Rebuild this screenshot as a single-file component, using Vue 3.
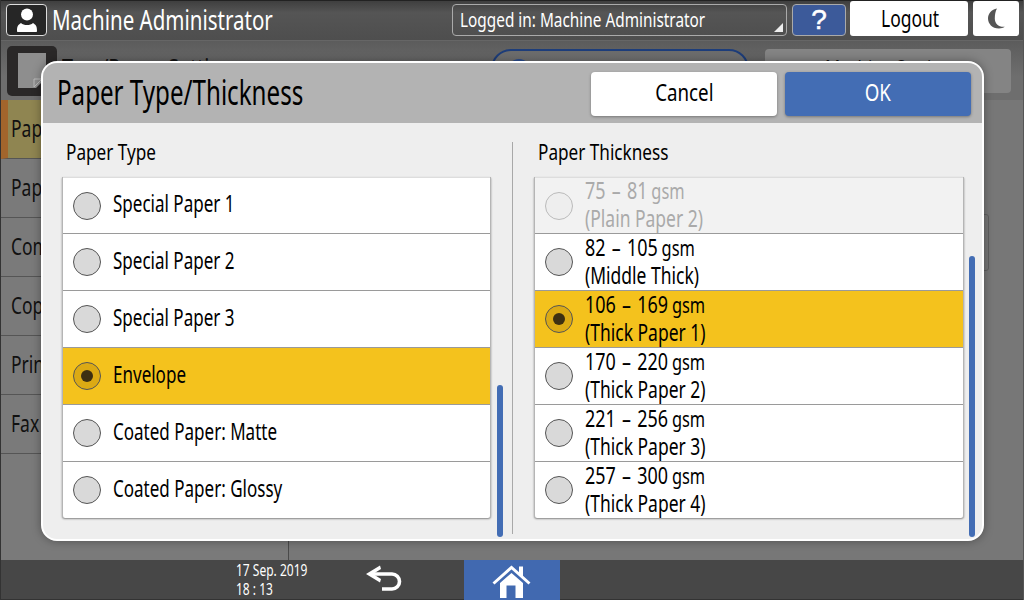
<script setup>
const typeRows = [
  { label: 'Special Paper 1' },
  { label: 'Special Paper 2' },
  { label: 'Special Paper 3' },
  { label: 'Envelope', selected: true },
  { label: 'Coated Paper: Matte' },
  { label: 'Coated Paper: Glossy' },
]
const thickRows = [
  { range: '75 – 81', name: '(Plain Paper 2)', disabled: true },
  { range: '82 – 105', name: '(Middle Thick)' },
  { range: '106 – 169', name: '(Thick Paper 1)', selected: true },
  { range: '170 – 220', name: '(Thick Paper 2)' },
  { range: '221 – 256', name: '(Thick Paper 3)' },
  { range: '257 – 300', name: '(Thick Paper 4)' },
]
const sideItems = ['Paper Tray', 'Paper', 'Common', 'Copier', 'Printer', 'Fax']
</script>

<template>
  <div class="screen">
    <header class="top">
      <div class="user-box">
        <svg width="22" height="24" viewBox="0 0 22 24"><circle cx="11" cy="6.500" r="6" fill="#fff"/><path d="M1 23c0-5 1-6 4-8 1.500 1.500 3.500 2 6 2s4.500-.5 6-2c3 2 4 3 4 8 0 .6-.4 1-1 1H2c-.6 0-1-.4-1-1z" fill="#fff"/></svg>
      </div>
      <span class="top-name"><span class="nw">Machine Administrator</span></span>
      <div class="logged">
        <span class="nw">Logged in: Machine Administrator</span>
        <i class="corner"></i>
      </div>
      <div class="help">?</div>
      <div class="logout"><span class="nw">Logout</span></div>
      <div class="moon">
        <svg width="17" height="21" viewBox="0 0 17 21"><path d="M9 .5C3.500 1.500 0 5.500 0 10.500S4 20.500 11 20.500c2.200 0 4.300-.6 5.800-1.700C10.500 19.300 6.800 15.500 6.800 10.500 6.800 6.500 7.500 3 9 .5z" fill="#555"/></svg>
      </div>
    </header>

    <div class="sub">
      <svg class="tray-icon" width="50" height="50" viewBox="0 0 50 50">
        <rect width="50" height="50" rx="5" fill="#2a2828"/>
        <path d="M11 7H39V32L29 42H11z" fill="#8e8e8e"/>
        <path d="M27 33H35L27 41z" fill="none" stroke="#bbb"/>
      </svg>
      <span class="sub-title"><span class="nw">Tray/Paper Settings</span></span>
      <div class="pill"><i class="pill-dot"></i></div>
      <div class="sub-btn"><span class="nw">Machine Settings</span></div>
    </div>

    <div class="main">
      <nav class="side">
        <div v-for="(s, i) in sideItems" :key="s" class="side-row" :class="{ active: i === 0 }">
          <span class="nw">{{ s }}</span>
        </div>
      </nav>
      <div class="content">
        <div class="ghost"></div>
      </div>
    </div>

    <footer class="foot">
      <div class="clock">
        <span class="nw">17 Sep. 2019</span>
        <span class="nw">18 : 13</span>
      </div>
      <svg class="back" width="38" height="30" viewBox="0 0 38 30">
        <path d="M5 10H27a7.500 7.500 0 0 1 0 15H17" fill="none" stroke="#fff" stroke-width="3.600"/>
        <path d="M1 10 15 1.500 16 5 8 10 16 15 15 18.500z" fill="#fff"/>
      </svg>
      <div class="home">
        <svg width="40" height="33" viewBox="0 0 40 33">
          <path d="M1.500 18.500 19.500 2.500 37.500 18.500" fill="none" stroke="#fff" stroke-width="3"/>
          <path d="M27 1.500h4v10.500l-4-3.500z" fill="#fff"/>
          <path d="M19.500 8 31 18V33H23.500V20.500H14.500V33H8V18z" fill="#fff"/>
        </svg>
      </div>
    </footer>

    <section class="modal">
      <div class="modal-head">
        <h1 class="modal-title"><span class="nw">Paper Type/Thickness</span></h1>
        <button class="btn cancel"><span class="nw">Cancel</span></button>
        <button class="btn ok"><span class="nw">OK</span></button>
      </div>
      <div class="modal-body">
        <div class="pane pane-left">
          <div class="pane-label"><span class="nw">Paper Type</span></div>
          <div class="list-wrap">
            <div class="list">
              <div v-for="r in typeRows" :key="r.label" class="row" :class="{ selected: r.selected }">
                <span class="radio"><i v-if="r.selected"></i></span>
                <span class="nw">{{ r.label }}</span>
              </div>
            </div>
            <div class="track"><div class="thumb thumb-left"></div></div>
          </div>
        </div>
        <div class="divider"></div>
        <div class="pane pane-right">
          <div class="pane-label"><span class="nw">Paper Thickness</span></div>
          <div class="list-wrap">
            <div class="list">
              <div v-for="r in thickRows" :key="r.range" class="row" :class="{ selected: r.selected, disabled: r.disabled }">
                <span class="radio"><i v-if="r.selected"></i></span>
                <div class="two">
                  <span class="nw range">{{ r.range }} <small>gsm</small></span>
                  <span class="nw">{{ r.name }}</span>
                </div>
              </div>
            </div>
            <div class="track"><div class="thumb thumb-right"></div></div>
          </div>
        </div>
      </div>
    </section>
  </div>
</template>

<style>
html, body { margin: 0; padding: 0; background: #777; }
</style>

<style scoped>
* { box-sizing: border-box; }
.screen {
  position: relative;
  width: 1024px;
  height: 600px;
  overflow: hidden;
  display: flex;
  flex-direction: column;
  background: #777;
  font-family: "Noto Sans", "Liberation Sans", sans-serif;
  border-left: 1px solid #333;
  border-right: 1px solid #555;
}
.nw {
  display: inline-block;
  white-space: nowrap;
  transform: scaleX(.76);
  transform-origin: left center;
}
.top {
  height: 41px;
  flex: none;
  display: flex;
  align-items: flex-start;
  background: linear-gradient(#3f3f3f, #555 30%, #4e4e4e);
  border-top: 1px solid #222;
  border-bottom: 1px solid #666;
  padding-left: 5px;
  color: #fff;
}
.user-box {
  width: 41px;
  height: 32px;
  margin-top: 3px;
  border: 1px solid #ddd;
  border-radius: 4px;
  background: #262626;
  display: flex;
  align-items: center;
  justify-content: center;
}
.top-name {
  width: 400px;
  margin-left: 5px;
  font-size: 27px;
  line-height: 37px;
}
.logged {
  position: relative;
  width: 335px;
  height: 32px;
  margin-top: 3px;
  border: 1px solid #aaa;
  border-radius: 4px;
  padding-left: 7px;
  font-size: 20px;
  line-height: 29px;
}
.logged .nw { transform: scaleX(.768); }
.corner {
  position: absolute;
  right: 3px;
  bottom: 3px;
  border-left: 9px solid transparent;
  border-bottom: 9px solid #eee;
}
.help {
  width: 54px;
  height: 32px;
  margin: 3px 0 0 5px;
  border: 1px solid #aaa;
  border-radius: 4px;
  background: #3c5a9a;
  text-align: center;
  font: 400 28px/30px "Liberation Sans", sans-serif;
  -webkit-text-stroke: .5px #fff;
}
.logout {
  width: 118px;
  height: 35px;
  margin-left: 4px;
  background: #fff;
  border-radius: 3px;
  color: #000;
  font-size: 23px;
  line-height: 35px;
  padding-left: 31px;
}
.moon {
  width: 46px;
  height: 35px;
  margin-left: 5px;
  background: #fff;
  border-radius: 3px;
  display: flex;
  align-items: center;
  justify-content: center;
}
.sub {
  height: 59px;
  flex: none;
  display: flex;
  align-items: flex-start;
  background: linear-gradient(#5c5c5c, #6e6e6e 60%);
  padding: 5px 11px 0 6px;
}
.tray-icon {
  flex: none;
}
.sub-title {
  width: 429px;
  margin-left: 5px;
  font-size: 26px;
  line-height: 30px;
  margin-top: 6px;
  color: #111;
}
.pill {
  width: 258px;
  height: 44px;
  margin-top: 3px;
  border: 2px solid #1d3d7a;
  border-radius: 20px;
  background: linear-gradient(#6c6c6c, #808080);
  padding: 8px 0 0 14px;
}
.pill-dot {
  display: block;
  width: 24px;
  height: 24px;
  border-radius: 50%;
  background: #2a4d90;
}
.sub-btn {
  width: 246px;
  height: 44px;
  margin: 3px 0 0 16px;
  background: #848484;
  border-radius: 4px;
  padding: 3px 0 0 60px;
  font-size: 22px;
  color: #111;
}
.main {
  flex: 1;
  display: flex;
  min-height: 0;
}
.side {
  width: 288px;
  background: #7a7a7a;
  border-right: 1px solid #4a4a4a;
}
.side-row {
  height: 59px;
  border-bottom: 1px solid #555;
  padding-left: 10px;
  font-size: 23px;
  line-height: 56px;
  color: #111;
}
.side-row.active {
  background: #8f8551;
  border-left: 7px solid #a2652c;
  padding-left: 3px;
}
.content {
  flex: 1;
  position: relative;
}
.ghost {
  position: absolute;
  right: 34px;
  top: 114px;
  width: 10px;
  height: 57px;
  border: 1px solid #5f5f5f;
  border-radius: 3px;
}
.foot {
  height: 40px;
  flex: none;
  display: flex;
  align-items: center;
  background: #474747;
  color: #fff;
  border-bottom: 1px solid #333;
}
.clock {
  width: 130px;
  margin-left: 235px;
  display: flex;
  flex-direction: column;
  font-size: 16px;
  line-height: 19px;
}
.clock .nw { transform: scaleX(.75); }
.back {
  margin-top: -2px;
  margin-left: -1px;
}
.home {
  width: 96px;
  height: 40px;
  margin-left: 61px;
  background: #4169b0;
  display: flex;
  align-items: flex-end;
  justify-content: center;
  padding-bottom: 2px;
}
.modal {
  position: absolute;
  left: 40px;
  top: 61px;
  width: 943px;
  height: 480px;
  border: 2px solid #fff;
  border-radius: 16px;
  background: #eee;
  overflow: hidden;
  display: flex;
  flex-direction: column;
  box-shadow: 0 0 10px rgba(0,0,0,.35);
}
.modal-head {
  height: 60px;
  flex: none;
  display: flex;
  align-items: flex-start;
  background: #b3b3b3;
  padding: 9px 10px 0 14px;
}
.modal-title {
  width: 534px;
  margin: 0;
  font-size: 34px;
  font-weight: 400;
  line-height: 40px;
  color: #000;
}
.modal-title .nw { transform: scaleX(.71); }
.btn {
  width: 186px;
  height: 44px;
  padding: 0 0 5px;
  border: none;
  border-radius: 4px;
  font-family: inherit;
  font-size: 24px;
  box-shadow: 0 1px 3px rgba(0,0,0,.35);
  text-align: center;
}
.btn .nw { transform-origin: center; transform: scaleX(.78); }
.cancel { background: #fff; color: #000; }
.ok { background: #436db4; color: #fff; margin-left: 8px; }
.modal-body {
  flex: 1;
  display: flex;
  align-items: flex-start;
  padding-top: 19px;
}
.pane-left { width: 469px; padding-left: 19px; }
.pane-right { padding-left: 21px; }
.divider {
  width: 1px;
  height: 392px;
  background: #a8a8a8;
}
.pane-label {
  height: 35px;
  padding-left: 4px;
  font-size: 22px;
  line-height: 19px;
  color: #000;
}
.pane-label .nw { transform: scaleX(.78); }
.list-wrap {
  display: flex;
}
.list {
  width: 429px;
  height: 341px;
  background: #fff;
  border-left: 1px solid #b5b5b5;
  border-right: 1px solid #b5b5b5;
  border-radius: 0 0 3px 3px;
  box-shadow: 0 1px 2px rgba(0,0,0,.45);
  overflow: hidden;
}
.pane-right .list { width: 430px; }
.row {
  height: 57px;
  display: flex;
  align-items: center;
  border-top: 1px solid #9a9a9a;
  padding-left: 10px;
  font-size: 23px;
  color: #000;
}
.row > .nw {
  margin-top: -4px;
  transform: scaleX(.74);
}
.row:first-child {
  height: 56px;
  border-top: 1px solid #ddd;
}
.row:first-child > .nw { margin-top: -5px; }
.row.selected { background: #f4c21d; }
.row.disabled { background: #f2f2f2; color: #aaa; }
.radio {
  width: 28px;
  height: 28px;
  flex: none;
  margin-right: 12px;
  border: 1px solid #555;
  border-radius: 50%;
  background: #d9d9d9;
  display: flex;
  align-items: center;
  justify-content: center;
}
.selected .radio { background: #dcaa14; }
.disabled .radio { background: #eee; border-color: #bbb; }
.radio i {
  width: 12px;
  height: 12px;
  border-radius: 50%;
  background: #3c2f12;
}
.two {
  display: flex;
  flex-direction: column;
  align-items: flex-start;
  margin-top: -3px;
}
.two .nw { height: 28px; line-height: 28px; }
.two .range {
  word-spacing: 2px;
  transform: scaleX(.78);
}
.two small { font-size: 21px; margin-left: -3px; }
.track {
  width: 6px;
  height: 360px;
  flex: none;
  margin-left: 5px;
}
.pane-left .track { margin-left: 6px; }
.thumb {
  width: 100%;
  background: #436db4;
  border-radius: 3px;
}
.thumb-left { height: 152px; margin-top: 208px; }
.thumb-right { height: 281px; margin-top: 79px; }
</style>
